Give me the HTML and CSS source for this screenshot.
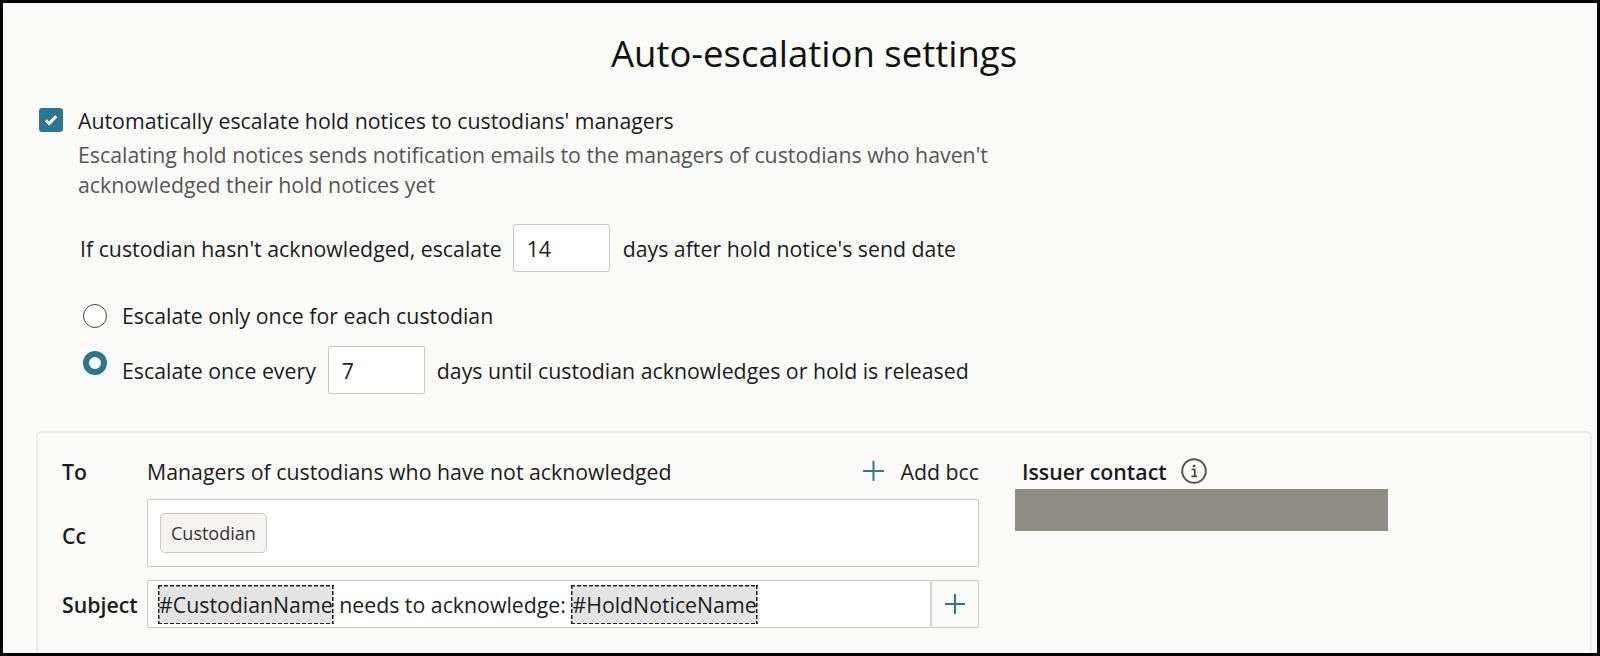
FILE: index.html
```html
<!DOCTYPE html>
<html lang="en">
<head>
    <meta charset="UTF-8">
    <title>Auto-escalation settings</title>
    <link rel="stylesheet" href="styles.css">
</head>
<body>
    <div class="page">
        <h1 class="page-title">Auto-escalation settings</h1>

        <div class="auto-row">
            <span class="checkbox">
                <svg width="14" height="12" viewBox="0 0 14 12"><path d="M1.8 6.2l3.4 3.4L12.2 2.2" fill="none" stroke="#fff" stroke-width="3"/></svg>
            </span>
            <div>
                <div class="auto-label">Automatically escalate hold notices to custodians' managers</div>
                <p class="auto-desc">Escalating hold notices sends notification emails to the managers of custodians who haven't acknowledged their hold notices yet</p>
            </div>
        </div>

        <div class="days-row">
            <span>If custodian hasn't acknowledged, escalate</span>
            <span class="num-input">14</span>
            <span>days after hold notice's send date</span>
        </div>

        <div class="radio-row radio-once">
            <span class="radio"></span>
            <span>Escalate only once for each custodian</span>
        </div>
        <div class="radio-row radio-every">
            <span class="radio radio-on"></span>
            <span>Escalate once every</span>
            <span class="num-input">7</span>
            <span>days until custodian acknowledges or hold is released</span>
        </div>

        <div class="email-panel">
            <div class="email-form">
                <div class="form-row to-row">
                    <span class="form-label">To</span>
                    <span class="to-value">Managers of custodians who have not acknowledged</span>
                    <span class="add-bcc">
                        <svg width="21" height="20" viewBox="0 0 21 20"><path d="M10.5 0v20M0 10h21" stroke="#2e7590" stroke-width="2"/></svg>
                        Add bcc
                    </span>
                </div>
                <div class="form-row cc-row">
                    <span class="form-label cc-label">Cc</span>
                    <div class="cc-field"><span class="chip">Custodian</span></div>
                </div>
                <div class="form-row subject-row">
                    <span class="form-label">Subject</span>
                    <div class="subject-field">
                        <div class="subject-text"><span class="token">#CustodianName</span> needs to acknowledge: <span class="token">#HoldNoticeName</span></div>
                        <span class="subject-add">
                            <svg width="20" height="20" viewBox="0 0 20 20"><path d="M10 0v20M0 10h20" stroke="#2e7590" stroke-width="2"/></svg>
                        </span>
                    </div>
                </div>
            </div>
            <div class="issuer">
                <div class="issuer-head">
                    <span class="form-label">Issuer contact</span>
                    <svg width="26" height="26" viewBox="0 0 26 26"><circle cx="13" cy="13" r="11.8" fill="none" stroke="#555" stroke-width="2"/><circle cx="13" cy="8" r="1.3" fill="#444"/><path d="M10.6 11.5h3.2v6.8M10.4 18.4h5.6" fill="none" stroke="#444" stroke-width="1.7"/></svg>
                </div>
                <div class="issuer-block"></div>
            </div>
        </div>
    </div>
</body>
</html>
```

FILE: styles.css
```css
* {
    box-sizing: border-box;
}
body {
    margin: 0;
    font-family: 'Open Sans', sans-serif;
    font-size: 21.3px;
    color: #1c1c1c;
}
.page {
    width: 1600px;
    height: 656px;
    padding: 0 5px 0 33px;
    border: 3px solid #000;
    background: #fafaf8;
    overflow: hidden;
}
.page-title {
    margin: 0;
    padding-top: 25px;
    height: 105px;
    font-size: 36.5px;
    line-height: 50px;
    font-weight: 400;
    text-align: center;
    color: #111;
}
.auto-row {
    display: flex;
    gap: 15px;
    padding-left: 3px;
}
.checkbox {
    flex: none;
    display: flex;
    align-items: center;
    justify-content: center;
    width: 24px;
    height: 24px;
    border-radius: 3px;
    background: #2e7590;
}
.auto-label {
    line-height: 26px;
}
.auto-desc {
    width: 930px;
    margin: 6px 0 0;
    line-height: 30px;
    color: #555;
}
.days-row {
    display: flex;
    align-items: center;
    gap: 12px;
    margin: 24px 0 0 44px;
}
.days-row .num-input {
    margin: 0 1px 0 -1px;
}
.num-input {
    width: 97px;
    height: 48px;
    padding-left: 13px;
    line-height: 48px;
    background: #fff;
    border: 1px solid #c8c8c5;
    border-radius: 2px;
}
.radio-row {
    display: flex;
    align-items: center;
    margin-left: 47px;
}
.radio-once {
    margin-top: 29px;
    gap: 12px;
}
.radio-every {
    margin-top: 16px;
    gap: 12px;
}
.radio {
    flex: none;
    width: 24px;
    height: 24px;
    margin-right: 3px;
    border: 1px solid #444;
    border-radius: 50%;
    background: #fff;
}
.radio-on {
    margin-top: -15px;
    border: 6px solid #2e7590;
}
.email-panel {
    display: flex;
    height: 240px;
    margin-top: 37px;
    padding: 23px 0 0 24px;
    border: 2px solid #ebebe8;
    border-radius: 6px;
}
.email-form {
    width: 917px;
}
.form-row {
    display: flex;
    align-items: center;
}
.form-label {
    font-weight: 600;
    color: #1c1c1c;
}
.form-row .form-label {
    width: 85px;
    flex: none;
}
.cc-label {
    margin-top: 5px;
}
.to-row {
    height: 30px;
}
.to-value {
    flex: 1;
}
.add-bcc {
    display: flex;
    align-items: center;
    gap: 17px;
}
.cc-row {
    margin-top: 13px;
}
.cc-field {
    flex: 1;
    height: 68px;
    padding: 13px 12px;
    background: #fff;
    border: 1px solid #c8c8c5;
    border-radius: 2px;
}
.chip {
    display: inline-block;
    height: 40px;
    padding: 0 10px;
    font-size: 18px;
    line-height: 38px;
    color: #333;
    background: #f5f4f2;
    border: 1px solid #c8c8c5;
    border-radius: 5px;
}
.subject-row {
    margin-top: 13px;
}
.subject-field {
    flex: 1;
    display: flex;
    height: 48px;
    background: #fff;
    border: 1px solid #c8c8c5;
    border-radius: 2px;
}
.subject-text {
    flex: 1;
    padding-left: 10px;
    line-height: 47px;
}
/* dashes drawn by hand, a dashed outline comes out too fine */
.token {
    padding: 5px 1px;
    background-color: #e4e4e4;
    background-image:
        repeating-linear-gradient(to right, #222 0 4px, transparent 4px 6px),
        repeating-linear-gradient(to right, #222 0 4px, transparent 4px 6px),
        repeating-linear-gradient(to bottom, #222 0 4px, transparent 4px 6px),
        repeating-linear-gradient(to bottom, #222 0 4px, transparent 4px 6px);
    background-size: 100% 1.5px, 100% 1.5px, 1.5px 100%, 1.5px 100%;
    background-position: top left, bottom left, top left, top right;
    background-repeat: no-repeat;
}
.subject-add {
    display: flex;
    align-items: center;
    justify-content: center;
    width: 48px;
    border-left: 2px solid #d4d4d1;
    background: #fafaf8;
}
.issuer {
    margin-left: 36px;
}
.issuer-head {
    display: flex;
    align-items: center;
    gap: 14px;
    height: 30px;
    margin-left: 7px;
}
.issuer-block {
    width: 373px;
    height: 42px;
    margin-top: 3px;
    background: #8f8d87;
}
```
